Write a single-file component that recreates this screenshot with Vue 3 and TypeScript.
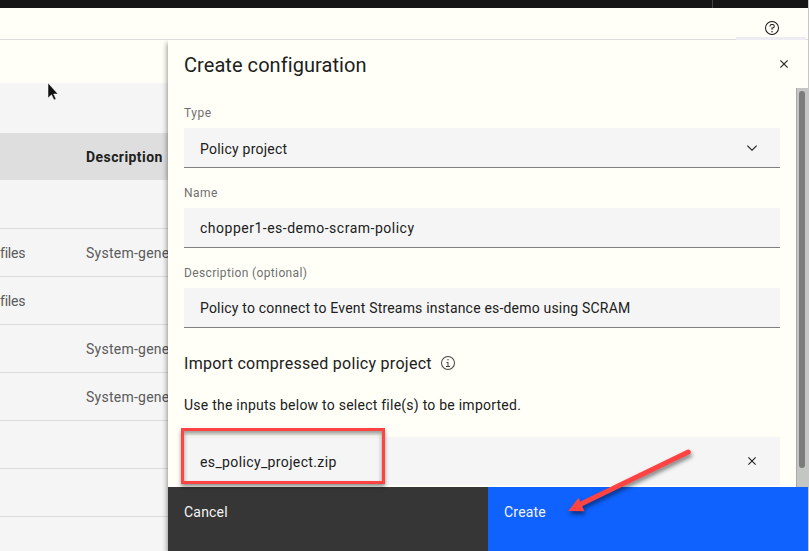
<script setup lang="ts">
interface Row {
  name: string
  description: string
}

interface Field {
  label: string
  value: string
  kind: 'type' | 'name' | 'description'
  select: boolean
}

const rows: Row[] = [
  { name: '', description: '' },
  { name: 'files', description: 'System-gene' },
  { name: 'files', description: '' },
  { name: '', description: 'System-gene' },
  { name: '', description: 'System-gene' },
  { name: '', description: '' },
  { name: '', description: '' },
  { name: '', description: '' },
]

const fields: Field[] = [
  { label: 'Type', value: 'Policy project', kind: 'type', select: true },
  { label: 'Name', value: 'chopper1-es-demo-scram-policy', kind: 'name', select: false },
  {
    label: 'Description (optional)',
    value: 'Policy to connect to Event Streams instance es-demo using SCRAM',
    kind: 'description',
    select: false,
  },
]
</script>

<template>
  <div class="screen">
    <div class="window">
      <header class="masthead"><span class="divider"></span></header>
      <div class="toolbar">
        <svg class="help" viewBox="0 0 32 32">
          <path d="M16 2a14 14 0 1 0 14 14A14 14 0 0 0 16 2Zm0 26a12 12 0 1 1 12-12 12 12 0 0 1-12 12Z" />
          <circle cx="16" cy="23.5" r="1.5" />
          <path d="M17 8h-1.5A4.49 4.49 0 0 0 11 12.500v.5h2v-.5A2.500 2.500 0 0 1 15.500 10H17a2.500 2.500 0 0 1 0 5h-2v4.500h2V17a4.500 4.500 0 0 0 0-9Z" />
        </svg>
        <span class="toolbar-edge"></span>
      </div>

      <div class="body">
        <main class="listing">
          <div class="page-head"></div>
          <div class="table-tools"></div>
          <div class="table-head"><span>Description</span></div>
          <div v-for="(row, i) in rows" :key="i" class="row">
            <span class="cell-name">{{ row.name }}</span>
            <span class="cell-desc">{{ row.description }}</span>
          </div>
        </main>

        <section class="panel">
          <div class="panel-head">
            <h2>Create configuration</h2>
            <svg class="close" viewBox="0 0 32 32">
              <path d="M24 9.400 22.600 8 16 14.600 9.400 8 8 9.400l6.600 6.600L8 22.600 9.400 24l6.600-6.600 6.600 6.600 1.400-1.400-6.600-6.600Z" />
            </svg>
          </div>

          <div class="scroll-area">
            <form class="form">
              <div v-for="field in fields" :key="field.kind" :class="['field', field.kind]">
                <label>{{ field.label }}</label>
                <div class="input">
                  <span class="value">{{ field.value }}</span>
                  <svg v-if="field.select" class="chevron" viewBox="0 0 16 16">
                    <path d="M8 11 3 6l.7-.7L8 9.600l4.300-4.300.7.7Z" />
                  </svg>
                </div>
              </div>

              <div class="import-title">
                <h3>Import compressed policy project</h3>
                <svg class="info" viewBox="0 0 32 32">
                  <path d="M17 22v-8h-4v2h2v6h-3v2h8v-2ZM16 8a1.500 1.500 0 1 0 1.500 1.500A1.500 1.500 0 0 0 16 8Z" />
                  <path d="M16 30a14 14 0 1 1 14-14 14 14 0 0 1-14 14Zm0-26a12 12 0 1 0 12 12A12 12 0 0 0 16 4Z" />
                </svg>
              </div>
              <p class="hint">Use the inputs below to select file(s) to be imported.</p>
              <div class="file">
                <span class="file-name">es_policy_project.zip</span>
                <svg class="remove" viewBox="0 0 32 32">
                  <path d="M24 9.400 22.600 8 16 14.600 9.400 8 8 9.400l6.600 6.600L8 22.600 9.400 24l6.600-6.600 6.600 6.600 1.400-1.400-6.600-6.600Z" />
                </svg>
              </div>
            </form>
            <div class="scrollbar"><div class="thumb"></div></div>
          </div>

          <footer class="actions">
            <button type="button" class="cancel">Cancel</button>
            <button type="button" class="create">Create</button>
          </footer>
        </section>
      </div>
    </div>

    <div class="highlight"></div>
    <svg class="arrow" viewBox="0 0 150 90">
      <path class="shaft" d="M128.300 12 L22 63.500" />
      <path class="tip" d="M8.300 71 L18.500 57.800 L24.500 71.200 Z" />
    </svg>
    <svg class="pointer" viewBox="0 0 14 20">
      <path d="M1 1v15l3.500-3.200 2.500 5.200 2-1-2.300-5H11Z" />
    </svg>
  </div>
</template>

<style>
body {
  margin: 0;
  background: #c6c6c6;
}
</style>

<style scoped>
.screen {
  position: relative;
  width: 809px;
  height: 551px;
  overflow: hidden;
  font-family: Roboto, "Noto Sans", sans-serif;
  font-size: 14px;
  color: #202020;
}
.window {
  display: flex;
  flex-direction: column;
  width: 808px;
  height: 551px;
  background: #fffff8;
}
.masthead {
  display: flex;
  height: 8px;
  background: #161616;
}
.divider {
  width: 1px;
  margin-left: 712px;
  background: #444;
}
.toolbar {
  position: relative;
  box-sizing: border-box;
  display: flex;
  justify-content: flex-end;
  height: 32px;
  padding: 12px 28px 0 0;
  border-bottom: 1px solid #dcdcdc;
}
.toolbar-edge {
  position: absolute;
  right: 2px;
  bottom: -1px;
  width: 70px;
  height: 3px;
  background: #ececf2;
}
svg {
  display: block;
  flex: none;
  fill: #161616;
}
.help {
  width: 16px;
  height: 16px;
}
.body {
  display: flex;
  height: 511px;
}
.listing {
  width: 168px;
  overflow: hidden;
  background: #f5f5f5;
}
.page-head {
  height: 43px;
  background: #fffff8;
}
.table-tools {
  height: 50px;
}
.table-head {
  display: flex;
  align-items: center;
  height: 47px;
  padding-left: 86px;
  background: #dedede;
  font-weight: 700;
  letter-spacing: 0.43px;
}
.row {
  box-sizing: border-box;
  display: flex;
  align-items: center;
  height: 48px;
  border-bottom: 1px solid #dcdcdc;
  color: #5a5a5a;
  white-space: nowrap;
}
.row:nth-child(4) {
  height: 49px;
}
.cell-name {
  flex: none;
  width: 86px;
  letter-spacing: -0.2px;
}
.cell-desc {
  flex: none;
  letter-spacing: 0.25px;
}
.panel {
  position: relative;
  display: flex;
  flex-direction: column;
  width: 640px;
  height: 511px;
  background: #fffff8;
  box-shadow: -1px 3px 5px rgba(0, 0, 0, 0.4);
  clip-path: inset(0 0 0 -10px);
}
.panel-head {
  display: flex;
  justify-content: space-between;
  height: 48px;
  padding: 0 16px;
}
h2 {
  margin: 10px 0 0;
  font-size: 20px;
  font-weight: 400;
  line-height: 30px;
  letter-spacing: 0.06px;
}
.close {
  width: 16px;
  height: 16px;
  margin-top: 16px;
}
.scroll-area {
  display: flex;
  height: 399px;
  overflow: hidden;
}
.form {
  width: 596px;
  padding: 17px 16px 0;
}
.field {
  height: 80px;
}
label {
  display: block;
  height: 23px;
  font-size: 12px;
  line-height: 16px;
  letter-spacing: 0.5px;
  color: #6f6f6f;
}
.description label {
  letter-spacing: 0.36px;
}
.input {
  box-sizing: border-box;
  display: flex;
  align-items: center;
  justify-content: space-between;
  height: 40px;
  padding: 0 20px 0 16px;
  border-bottom: 1px solid #808080;
  background: #f5f5f5;
}
.type .value {
  padding-top: 2px;
  letter-spacing: 0.23px;
}
.name .value {
  letter-spacing: 0.5px;
}
.description .value {
  letter-spacing: 0.19px;
}
.chevron {
  width: 16px;
  height: 16px;
}
.import-title {
  display: flex;
  align-items: center;
  gap: 8px;
  height: 36px;
}
h3 {
  margin: 0;
  padding-top: 1px;
  font-size: 16px;
  font-weight: 400;
  line-height: 22px;
  letter-spacing: 0.28px;
}
.info {
  width: 16px;
  height: 16px;
  fill: #444;
}
.hint {
  margin: 14px 0 0;
  height: 37px;
  line-height: 20px;
  letter-spacing: 0.24px;
}
.file {
  display: flex;
  align-items: center;
  justify-content: space-between;
  height: 48px;
  margin-top: 5px;
  padding: 0 20px 0 16px;
  background: #f5f5f5;
}
.file-name {
  padding-top: 2px;
  letter-spacing: 0.37px;
}
.remove {
  width: 16px;
  height: 16px;
}
.scrollbar {
  box-sizing: border-box;
  width: 12px;
  padding: 3px 3px 0 2px;
  border-left: 1px solid #aaa;
  background: #c4c6c4;
}
.thumb {
  width: 6px;
  height: 377px;
  border-radius: 3px;
  background: #7c7c7c;
}
.actions {
  display: flex;
  height: 64px;
}
button {
  display: flex;
  flex: 1;
  padding: 16px 16px 0;
  border: 0;
  color: #f4f4f4;
  font: inherit;
  line-height: 18px;
  letter-spacing: 0.2px;
  text-align: left;
}
.cancel {
  background: #363636;
}
.create {
  background: #0f62fe;
}
.highlight {
  position: absolute;
  left: 181px;
  top: 428px;
  box-sizing: border-box;
  width: 204px;
  height: 56px;
  border: 3px solid #ff4343;
  box-shadow: 0 3px 4px rgba(0, 0, 0, 0.4), inset 0 3px 4px rgba(0, 0, 0, 0.4);
}
.arrow {
  position: absolute;
  left: 560px;
  top: 440px;
  width: 150px;
  height: 90px;
  filter: drop-shadow(1px 3px 2px rgba(0, 0, 0, 0.5));
}
.shaft {
  fill: none;
  stroke: #ff4343;
  stroke-width: 5px;
  stroke-linecap: round;
}
.tip {
  fill: #ff4343;
}
.pointer {
  position: absolute;
  left: 47px;
  top: 82px;
  width: 14px;
  height: 20px;
}
.pointer path {
  fill: #111;
  stroke: #fff;
  stroke-width: 0.5px;
}
</style>
